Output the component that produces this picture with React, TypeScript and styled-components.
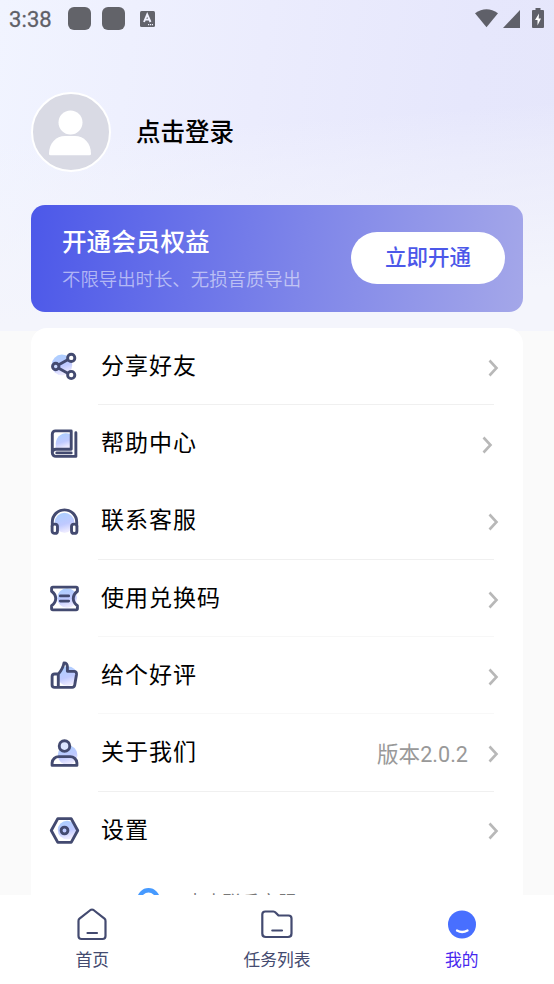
import React from 'react';
import styled, { createGlobalStyle } from 'styled-components';

const Global = createGlobalStyle`
  * { box-sizing: border-box; }
  body { margin: 0; font-family: Roboto, 'Noto Sans CJK SC', sans-serif; }
  svg { display: block; overflow: visible; }
`;

const Screen = styled.div`
  width: 554px;
  height: 984px;
  overflow: hidden;
  display: flex;
  flex-direction: column;
  background:
    linear-gradient(176deg, rgba(244, 245, 252, 0) 140px, rgba(244, 245, 252, 0.35) 190px, #f4f5fc 325px) 0 0 / 554px 331px no-repeat,
    linear-gradient(98deg, #f1f4ff 0%, #ebecfd 45%, #e6e7fc 80%, #e5e6fb 100%) 0 0 / 554px 331px no-repeat,
    #fafafa;
`;

const StatusBar = styled.header`
  height: 38px;
  flex: none;
  display: flex;
  align-items: center;
  padding: 0 9px 0 9px;
  color: #5f6068;
`;

const Clock = styled.span`
  width: 59px;
  font-size: 22px;
  line-height: 38px;
  letter-spacing: 0.1px;
  padding-top: 1px;
  -webkit-text-stroke: 0.3px #5f6068;
`;

const NoticeBlock = styled.span`
  width: 23px;
  height: 23px;
  border-radius: 6px;
  margin-right: 11px;
  margin-top: -1px;
  background: #626369;
`;

const StatusRight = styled.div`
  margin-left: auto;
  display: flex;
`;

const Content = styled.main`
  flex: 1;
  min-height: 0;
  overflow: hidden;
  padding: 54px 31px 0;
`;

const Profile = styled.section`
  display: flex;
  align-items: center;
  gap: 25px;
  height: 80px;
`;

const Avatar = styled.div`
  width: 80px;
  height: 80px;
  border-radius: 50%;
  border: 2px solid #fff;
  background: #d9dae4;
  overflow: hidden;
`;

const LoginText = styled.h1`
  margin: 2px 0 0;
  font-size: 24.5px;
  line-height: 36px;
  font-weight: 500;
  color: #000;
`;

const Banner = styled.section`
  margin-top: 32.5px;
  height: 107.5px;
  border-radius: 14px;
  display: flex;
  align-items: center;
  justify-content: space-between;
  padding: 0 18px 0 31px;
  background: linear-gradient(97deg, #4c58e9 0%, #7e85e9 55%, #a4a7e9 100%);
`;

const BannerTitle = styled.h2`
  margin: 2px 0 0;
  font-size: 24.6px;
  line-height: 36px;
  font-weight: 500;
  color: #fff;
`;

const BannerNote = styled.p`
  margin: 5px 0 0;
  font-size: 18.4px;
  line-height: 28px;
  font-weight: 350;
  color: rgba(255, 255, 255, 0.55);
`;

const OpenButton = styled.button`
  width: 154px;
  height: 52px;
  margin-bottom: 1px;
  border: 0;
  border-radius: 26px;
  background: #fff;
  color: #4c58e9;
  font: 500 21.5px/52px Roboto, 'Noto Sans CJK SC', sans-serif;
  padding: 0;
`;

const Menu = styled.section`
  margin-top: 16px;
  height: 600px;
  border-radius: 16px;
  background: #fff;
`;

const Row = styled.div<{ $line?: string; $end?: number }>`
  display: flex;
  align-items: center;
  height: 77.3px;
  padding-left: 18px;
  padding-right: ${(p) => p.$end ?? 25}px;
  background: linear-gradient(${(p) => p.$line ?? '#fff'}, ${(p) => p.$line ?? '#fff'}) 67px 100% / 396px 1px no-repeat;
`;

const RowLabel = styled.span`
  margin-left: 21px;
  margin-top: 0.5px;
  font-size: 23px;
  letter-spacing: 1px;
  line-height: 34px;
  color: #000;
`;

const Version = styled.span`
  margin-left: auto;
  margin-bottom: 2px;
  font-size: 21.6px;
  color: #999;
`;

const Arrow = styled.svg<{ $auto: boolean }>`
  margin-left: ${(p) => (p.$auto ? 'auto' : '20px')};
  margin-top: 2px;
`;

const Contact = styled.div`
  display: flex;
  padding: 19px 0 0 106px;
  gap: 25px;
  font-size: 18.4px;
  line-height: 29px;
  color: #777;
`;

const TabBar = styled.nav`
  flex: none;
  height: 89px;
  display: grid;
  grid-template-columns: repeat(3, 1fr);
  background: #fff;
`;

const Tab = styled.div<{ $active?: boolean }>`
  display: flex;
  flex-direction: column;
  align-items: center;
  padding-top: 12px;
  gap: 7px;
  font-size: 16.8px;
  line-height: 24px;
  color: ${(p) => (p.$active ? '#4728ef' : '#444b70')};
`;

const ink = '#434a70';

const glyphs: Record<string, React.ReactNode> = {
  share: (
    <>
      <circle cx="12.500" cy="13.500" r="10" fill="url(#tint)" stroke="none" />
      <path d="M9 13.500 19 8M9 16.500l10 5.500" />
      <circle cx="6.500" cy="15" r="3.100" fill="#c9d8ff" />
      <g fill="#fff">
        <circle cx="21.500" cy="6.700" r="3.500" />
        <circle cx="21.500" cy="23.200" r="3.500" />
      </g>
    </>
  ),
  book: (
    <>
      <path d="M6.500 20V15a10 10 0 0 1 14-9v14z" fill="url(#tint)" stroke="none" />
      <path d="M21.500 2.800H6.200a3 3 0 0 0-3 3V24a3.500 3.500 0 0 0 3.500 3.500H26V4.500M3.400 23.500c0-2 1.300-2.900 3.200-2.900h14.900V2.800M7.500 24.100h14" />
    </>
  ),
  headset: (
    <>
      <path d="M8 22.500a9.500 9.500 0 1 1 14 0q-7 7-14 0z" fill="url(#tint)" stroke="none" />
      <path d="M3.200 20v-4.500a11.800 11.800 0 0 1 23.600 0V20" />
      <rect x="3" y="17.500" width="5.200" height="9" rx="2.400" fill="#fff" />
      <rect x="21.800" y="17.500" width="5.200" height="9" rx="2.400" fill="#fff" />
    </>
  ),
  ticket: (
    <>
      <circle cx="17.500" cy="14.500" r="9.500" fill="url(#tint)" stroke="none" />
      <path d="M3.800 4h22.400q1.300 0 1.300 1.300V8q-4 3-4 7t4 7v2.700q0 1.300-1.300 1.300H3.800q-1.300 0-1.300-1.300V22q4-3 4-7t-4-7V5.300Q2.500 4 3.800 4z" />
      <path d="M11 12.500h8M11 17.500h8" />
    </>
  ),
  like: (
    <>
      <circle cx="18" cy="15.500" r="9.500" fill="url(#tint)" stroke="none" />
      <path d="M9 13.500H5.500q-2.500 0-2.500 2.500v8.200q0 2.300 2.500 2.300h17q2 0 2.400-2.200l1.700-10.300q.3-3-2.400-3H17.800V6.500q0-3.700-3.300-3.700-.9 5.700-5.500 10.700zM9 13.500v13" />
    </>
  ),
  person: (
    <>
      <circle cx="18" cy="16.500" r="9.500" fill="url(#tint)" stroke="none" />
      <circle cx="15" cy="7.800" r="5.100" fill="#dce5ff" />
      <path d="M3 26.500V24a6.500 6.500 0 0 1 6.500-6h11A6.500 6.500 0 0 1 27 24v2.500z" />
    </>
  ),
  gear: (
    <>
      <circle cx="17.500" cy="14.500" r="9" fill="url(#tint)" stroke="none" />
      <path d="M8.500 3.500h13L27.800 15l-6.300 11.500h-13L2.200 15z" />
      <circle cx="15" cy="15" r="3.300" />
    </>
  ),
};

function MenuIcon({ name }: { name: string }) {
  return (
    <svg width="31" height="31" viewBox="0 0 30 30" fill="none" stroke={ink} strokeWidth="2.800" strokeLinecap="round" strokeLinejoin="round">
      <defs>
        <linearGradient id="tint" x1="0" y1="0" x2="0.300" y2="1">
          <stop offset="0" stopColor="#a9d0ff" />
          <stop offset="0.650" stopColor="#bfc9ff" />
          <stop offset="1" stopColor="#ebe9ff" />
        </linearGradient>
      </defs>
      {glyphs[name]}
    </svg>
  );
}

const rows: { icon: string; label: string; line?: string; end?: number; note?: string }[] = [
  { icon: 'share', label: '分享好友', line: '#f0f0f0' },
  { icon: 'book', label: '帮助中心', end: 31 },
  { icon: 'headset', label: '联系客服', line: '#f0f0f0' },
  { icon: 'ticket', label: '使用兑换码', line: '#f7f7f7' },
  { icon: 'like', label: '给个好评', line: '#f8f8f8' },
  { icon: 'person', label: '关于我们', line: '#f0f0f0', note: '版本2.0.2' },
  { icon: 'gear', label: '设置' },
];

export default function App() {
  return (
    <Screen>
      <Global />
      <StatusBar>
        <Clock>3:38</Clock>
        <NoticeBlock />
        <NoticeBlock />
        <svg width="15" height="16" viewBox="0 0 15 16">
          <rect width="15" height="16" rx="1.500" x="4" fill="#62636b" />
          <path d="m8 11 3.200-7.500L14.500 11M9.300 8.600h4" fill="none" stroke="#f0f1ff" strokeWidth="1.900" />
          <path d="M12 13.700h5" stroke="#f0f1ff" strokeWidth="1.200" strokeDasharray="1.200 .8" />
        </svg>
        <StatusRight>
          <svg width="70" height="22" viewBox="0 0 70 22" fill="#5f6069">
            <path d="M0 5.200Q11.500-2.500 23 5.200L11.500 19.200z" />
            <path d="M28 20 45 2v18z" />
            <path d="M60.500 0h5v2H68q1 0 1 1v16q0 1-1 1H58q-1 0-1-1V3q0-1 1-1h2.500z" />
            <path d="M64 5.500 60 12h2.500v5.500L66 10.500h-2.300z" fill="#fff" />
          </svg>
        </StatusRight>
      </StatusBar>
      <Content>
        <Profile>
          <Avatar>
            <svg width="76" height="76" viewBox="0 0 76 76" fill="#fff">
              <circle cx="37.500" cy="28.500" r="12" />
              <path d="M16 60c0-11 7-18 16-18h10c9 0 16 7 16 18q0 1.300-1.500 1.300h-39Q16 61.300 16 60z" />
            </svg>
          </Avatar>
          <LoginText>点击登录</LoginText>
        </Profile>
        <Banner>
          <div>
            <BannerTitle>开通会员权益</BannerTitle>
            <BannerNote>不限导出时长、无损音质导出</BannerNote>
          </div>
          <OpenButton>立即开通</OpenButton>
        </Banner>
        <Menu>
          {rows.map((r) => (
            <Row key={r.label} $line={r.line} $end={r.end}>
              <MenuIcon name={r.icon} />
              <RowLabel>{r.label}</RowLabel>
              {r.note && <Version>{r.note}</Version>}
              <Arrow $auto={!r.note} width="10" height="18" viewBox="0 0 10 18" fill="none" stroke="#b8b8b8" strokeWidth="2.600">
                <path d="m1.500 1.500 7 7.500-7 7.500" />
              </Arrow>
            </Row>
          ))}
          <Contact>
            <svg width="24" height="24" viewBox="0 0 24 24">
              <circle cx="11.500" cy="11.500" r="9.200" fill="none" stroke="#469aff" strokeWidth="4.400" />
            </svg>
            <span>点击联系客服</span>
          </Contact>
        </Menu>
      </Content>
      <TabBar>
        <Tab>
          <svg width="34" height="34" viewBox="0 0 34 34" fill="none" stroke={ink} strokeWidth="2.200" strokeLinecap="round" strokeLinejoin="round">
            <path d="M3.500 14q0-1.500 1-2.300L15.500 3q1.500-1 3 0l11 8.700q1 .8 1 2.300v15q0 3-3 3h-21q-3 0-3-3zM12.500 26h9.500" />
          </svg>
          首页
        </Tab>
        <Tab>
          <svg width="34" height="34" viewBox="0 0 34 34" fill="none" stroke={ink} strokeWidth="2.200" strokeLinecap="round" strokeLinejoin="round">
            <path d="M2.300 7.500q0-3 3-3h8q1.500 0 2.500 1.200L18.500 8.500h10q3 0 3 3v15q0 3.500-3.500 3.500H5.800q-3.500 0-3.500-3.500zM12.300 23.500h9.700" />
          </svg>
          任务列表
        </Tab>
        <Tab $active>
          <svg width="34" height="34" viewBox="0 0 34 34">
            <circle cx="17" cy="17.500" r="14" fill="#486fff" />
            <path d="M12 23.500q5 3 10.500 0" fill="none" stroke="#fff" strokeWidth="2.300" strokeLinecap="round" />
          </svg>
          我的
        </Tab>
      </TabBar>
    </Screen>
  );
}
